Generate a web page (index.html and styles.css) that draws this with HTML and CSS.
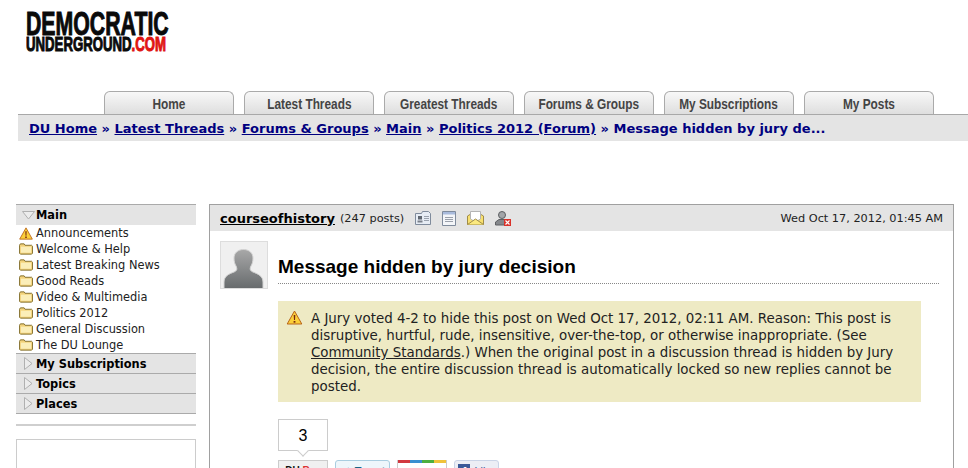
FILE: index.html
```html
<!DOCTYPE html>
<html>
<head>
  <title>Message hidden by jury decision</title>
  <link rel="stylesheet" href="styles.css">
</head>
<body>
  <svg class="defs" width="0" height="0">
    <symbol id="folder" viewBox="0 0 15 12">
      <path d="M.5 2 1.500.5h4l1 1.500h7l1 1v7.500l-1 1H1.500l-1-1z" fill="#f3d27a" stroke="#7d6a2a"/>
      <path d="M2 3.500h11v6.500H2z" fill="#fbeeb8"/>
    </symbol>
    <symbol id="warn" viewBox="0 0 16 15">
      <path d="M8 1 15.300 14H.7z" fill="#fbcf3a" stroke="#b8641a" stroke-linejoin="round"/>
      <path d="M7.200 5h1.600l-.3 5h-1z" fill="#7a2a10"/>
      <path d="M7.100 11h1.800v1.700H7.100z" fill="#7a2a10"/>
    </symbol>
  </svg>

  <div class="logo">
    <div class="logo-top"><span>DEMOCRATIC</span></div>
    <div class="logo-bottom"><span>UNDERGROUND<em>.COM</em></span></div>
  </div>

  <div class="tabs">
    <a class="tab" href="#"><span>Home</span></a>
    <a class="tab" href="#"><span>Latest Threads</span></a>
    <a class="tab" href="#"><span>Greatest Threads</span></a>
    <a class="tab" href="#"><span>Forums &amp; Groups</span></a>
    <a class="tab" href="#"><span>My Subscriptions</span></a>
    <a class="tab" href="#"><span>My Posts</span></a>
  </div>

  <div class="crumbs">
    <a href="#">DU Home</a> » <a href="#">Latest Threads</a> » <a href="#">Forums &amp; Groups</a> » <a href="#">Main</a> » <a href="#">Politics 2012 (Forum)</a> » Message hidden by jury de...
  </div>

  <div class="layout">
    <div class="sidebar">
      <div class="side-menu">
        <div class="side-head open">
          <svg width="13" height="9" viewBox="0 0 13 9"><path d="M.5.500h12L6.500 8z" fill="#ececec" stroke="#b0b0b0"/></svg>
          Main
        </div>
        <a class="side-item" href="#"><svg class="side-icon" width="14" height="13"><use href="#warn"/></svg>Announcements</a>
        <a class="side-item" href="#"><svg class="side-icon" width="14" height="12"><use href="#folder"/></svg>Welcome &amp; Help</a>
        <a class="side-item" href="#"><svg class="side-icon" width="14" height="12"><use href="#folder"/></svg>Latest Breaking News</a>
        <a class="side-item" href="#"><svg class="side-icon" width="14" height="12"><use href="#folder"/></svg>Good Reads</a>
        <a class="side-item" href="#"><svg class="side-icon" width="14" height="12"><use href="#folder"/></svg>Video &amp; Multimedia</a>
        <a class="side-item" href="#"><svg class="side-icon" width="14" height="12"><use href="#folder"/></svg>Politics 2012</a>
        <a class="side-item" href="#"><svg class="side-icon" width="14" height="12"><use href="#folder"/></svg>General Discussion</a>
        <a class="side-item" href="#"><svg class="side-icon" width="14" height="12"><use href="#folder"/></svg>The DU Lounge</a>
        <div class="side-closed">
          <div class="side-head closed">
            <svg width="9" height="13" viewBox="0 0 9 13"><path d="M.5.500v12L8 6.500z" fill="#ececec" stroke="#b0b0b0"/></svg>
            My Subscriptions
          </div>
          <div class="side-head closed">
            <svg width="9" height="13" viewBox="0 0 9 13"><path d="M.5.500v12L8 6.500z" fill="#ececec" stroke="#b0b0b0"/></svg>
            Topics
          </div>
          <div class="side-head closed">
            <svg width="9" height="13" viewBox="0 0 9 13"><path d="M.5.500v12L8 6.500z" fill="#ececec" stroke="#b0b0b0"/></svg>
            Places
          </div>
        </div>
      </div>
      <div class="side-rule"></div>
      <div class="side-box"></div>
    </div>

    <div class="post">
      <div class="post-head">
        <a class="author" href="#">courseofhistory</a>
        <span class="count">(247 posts)</span>
        <span class="post-icons">
          <svg width="16" height="14" viewBox="0 0 16 14"><path d="M.5 2.500h6l1-2h6l2 2v11H.5z" fill="#e6ecf4" stroke="#7f8b9c"/><path d="M3 5h4v3.500H3z" fill="#5f6670"/><path d="M2.500 9.500h5v2h-5z" fill="#7a808a"/><path d="M9 5h5v1H9zM9 7h5v1H9zM9 9h5v1H9z" fill="#9aa2ae"/></svg>
          <svg width="14" height="15" viewBox="0 0 14 15"><path d="M.5.500h13v14H.5z" fill="#f3f5f8" stroke="#7f8b9c"/><path d="M1 1h12v2.500H1z" fill="#a9bbdc"/><path d="M3 6h8v1H3zM3 8h8v1H3zM3 10h8v1H3z" fill="#9aa0aa"/></svg>
          <svg width="17" height="14" viewBox="0 0 17 14"><path d="M.5 5 3 3.500h11L16.500 5v8.500H.5z" fill="#f8e070" stroke="#a08c48"/><path d="M3.500.5h10V8l-5 3-5-3z" fill="#fff" stroke="#b4b4b4"/><path d="M.5 13.500 8.500 8l8 5.500" fill="#fbe97f" stroke="#a08c48"/></svg>
          <svg width="16" height="15" viewBox="0 0 16 15"><circle cx="7" cy="4" r="3.500" fill="#a2a5a8" stroke="#5d5f62"/><path d="M.5 14v-3L4 8.500h6l2 2V14z" fill="#85888c" stroke="#5d5f62"/><path d="M9 8h7v7H9z" fill="#d9322a"/><path d="m10.500 9.500 4 4m0-4-4 4" stroke="#fff" stroke-width="1.200"/></svg>
        </span>
        <span class="post-date">Wed Oct 17, 2012, 01:45 AM</span>
      </div>

      <div class="post-body">
        <div class="avatar">
          <svg width="46" height="46" viewBox="0 0 46 46">
            <defs>
              <linearGradient id="sil" x1="0" y1="0" x2="0" y2="1">
                <stop offset="0" stop-color="#a8a8a8"/>
                <stop offset="1" stop-color="#666a6c"/>
              </linearGradient>
            </defs>
            <path d="M3 47v-7c0-6 5-8 10-10 3-1.200 3.500-3 2-6-1.500-2.500-2-5-2-8 0-5 4-8.500 9.500-8.500S32 11 32 16c0 3-.5 5.500-2 8-1.500 3-1 4.800 2 6 5 2 10 4 10 10v7z" fill="url(#sil)" stroke="#d4d4d4"/>
          </svg>
        </div>
        <div class="post-main">
          <h1 class="post-title">Message hidden by jury decision</h1>
          <div class="notice">
            <svg class="notice-icon" width="17" height="15"><use href="#warn"/></svg>
            <p>A Jury voted 4-2 to hide this post on Wed Oct 17, 2012, 02:11 AM. Reason: This post is disruptive, hurtful, rude, insensitive, over-the-top, or otherwise inappropriate. (See <a href="#">Community Standards</a>.) When the original post in a discussion thread is hidden by Jury decision, the entire discussion thread is automatically locked so new replies cannot be posted.</p>
          </div>
          <div class="rec-count">3</div>
          <div class="share">
            <div class="share-btn du"><b>DU</b> <i>Rec</i></div>
            <div class="share-btn tweet"><svg width="12" height="10" viewBox="0 0 14 10"><path d="M1 3c2 2 4 3 6 3 0-3 3-5 5-2l2-1-1 3c0 3-3 4-6 4S2 8 1 3z" fill="#3b94c8"/></svg> Tweet</div>
            <div class="share-btn gplus">+1</div>
            <div class="share-btn like"><span class="fb">f</span>Like</div>
          </div>
        </div>
      </div>
    </div>
  </div>
</body>
</html>
```

FILE: styles.css
```css
html, body {
  margin: 0;
  height: 468px;
  overflow: hidden;
}
body {
  background: #fff;
  font-family: "DejaVu Sans", Verdana, sans-serif;
  color: #111;
}
.defs {
  display: block;
  height: 0;
}

/* logo */
.logo {
  height: 91px;
  padding: 10px 0 0 26px;
  box-sizing: border-box;
  font-family: "Liberation Sans", Arial, sans-serif;
  font-weight: bold;
  color: #0a0a0a;
  -webkit-text-stroke: 1px #0a0a0a;
  white-space: nowrap;
}
.logo span {
  display: inline-block;
  transform-origin: left center;
}
.logo-top {
  font-size: 33px;
  line-height: 27px;
}
.logo-top span {
  transform: scaleX(0.645);
}
.logo-bottom {
  font-size: 20px;
  line-height: 15px;
}
.logo-bottom span {
  transform: scaleX(0.66);
}
.logo-bottom em {
  font-style: normal;
  color: #e01512;
  -webkit-text-stroke-color: #e01512;
}

/* tabs */
.tabs {
  display: flex;
  gap: 10px;
  margin-left: 104px;
}
.tab {
  width: 130px;
  height: 23px;
  box-sizing: border-box;
  border: 1px solid #aaa;
  border-bottom: 0;
  border-radius: 6px 6px 0 0;
  background: linear-gradient(#f8f8f8, #dedede);
  text-align: center;
  font-family: "Liberation Sans", Arial, sans-serif;
  font-weight: bold;
  font-size: 15px;
  line-height: 24px;
  color: #444;
  text-decoration: none;
  white-space: nowrap;
}
.tab span {
  display: inline-block;
  transform: scaleX(0.79);
}

/* breadcrumb */
.crumbs {
  margin-left: 18px;
  height: 27px;
  box-sizing: border-box;
  border-top: 1px solid #a8a8a8;
  background: #e4e4e4;
  padding-left: 11px;
  font-size: 13px;
  font-weight: bold;
  line-height: 27px;
  color: #000080;
  white-space: nowrap;
}
.crumbs a {
  color: #000080;
}

/* page body */
.layout {
  display: flex;
  gap: 13px;
  margin: 63px 0 0 16px;
}
.sidebar {
  width: 180px;
  flex: none;
}
.side-menu {
  border-top: 1px solid #aaa;
}
.side-head {
  display: flex;
  align-items: center;
  height: 20px;
  box-sizing: border-box;
  background: #e4e4e4;
  font-size: 11.400px;
  font-weight: bold;
  color: #000;
}
.side-head.open {
  padding-left: 6px;
  gap: 1px;
}
.side-closed {
  border-top: 1px solid #aaa;
}
.side-head.closed {
  border-bottom: 1px solid #aaa;
  padding-left: 8px;
  gap: 3px;
}
.side-item {
  display: flex;
  align-items: center;
  height: 16px;
  padding-left: 3px;
  font-size: 11.400px;
  color: #222;
  text-decoration: none;
}
.side-icon {
  margin-right: 3px;
  flex: none;
}
.side-rule {
  height: 2px;
  margin-top: 10px;
  background: #cfcfcf;
}
.side-box {
  height: 60px;
  margin-top: 13px;
  border: 1px solid #ccc;
}

/* post */
.post {
  width: 745px;
  box-sizing: border-box;
  height: 300px;
  border: 1px solid #a0a0a0;
}
.post-head {
  display: flex;
  align-items: center;
  height: 26px;
  background: #e4e4e4;
  padding: 0 10px;
  font-size: 11.300px;
  color: #222;
}
.author {
  font-size: 13px;
  font-weight: bold;
  color: #000;
}
.count {
  margin-left: 5px;
}
.post-icons {
  display: flex;
  align-items: center;
  gap: 11px;
  margin-left: 11px;
}
.post-date {
  margin-left: auto;
}
.post-body {
  display: flex;
  gap: 10px;
  padding: 10px 0 0 10px;
}
.avatar {
  width: 48px;
  height: 48px;
  flex: none;
  box-sizing: border-box;
  border: 1px solid #ddd;
  background: #f0f0f0;
  overflow: hidden;
}
.post-main {
  width: 661px;
}
.post-title {
  margin: 0 0 17px;
  height: 43px;
  box-sizing: border-box;
  border-bottom: 1px dotted #888;
  font-family: "Liberation Sans", Arial, sans-serif;
  font-size: 19px;
  font-weight: bold;
  line-height: 52px;
  color: #000;
}
.notice {
  display: flex;
  width: 643px;
  height: 101px;
  box-sizing: border-box;
  background: #eeeac4;
  padding: 9px 10px 0 8px;
}
.notice-icon {
  flex: none;
  margin: 0 8px 0 0;
}
.notice p {
  margin: 0;
  font-size: 13.400px;
  line-height: 17px;
  color: #222;
}
.notice a {
  color: #222;
}
.rec-count {
  position: relative;
  width: 50px;
  height: 32px;
  box-sizing: border-box;
  margin-top: 17px;
  border: 1px solid #ccc;
  text-align: center;
  font-family: "Liberation Sans", Arial, sans-serif;
  font-size: 16px;
  line-height: 32px;
  color: #000;
}
.rec-count::after {
  content: "";
  position: absolute;
  left: 20px;
  bottom: -5px;
  width: 7px;
  height: 7px;
  background: #fff;
  border-right: 1px solid #ccc;
  border-bottom: 1px solid #ccc;
  transform: rotate(45deg);
}
.share {
  display: flex;
  margin-top: 9px;
  gap: 7px;
}
.share-btn {
  height: 26px;
  box-sizing: border-box;
  padding-top: 3px;
  font-family: "Liberation Sans", Arial, sans-serif;
  font-size: 11px;
  line-height: 14px;
  text-align: center;
  white-space: nowrap;
  border-radius: 3px;
}
.du {
  width: 50px;
  border: 1px solid #ccc;
  border-radius: 0;
  background: #f0f0f0;
  font-size: 10px;
}
.du i {
  color: #d33;
  font-style: normal;
  font-weight: bold;
}
.tweet {
  width: 55px;
  border: 1px solid #a9cde0;
  background: #eef6fb;
  color: #186487;
  font-weight: bold;
}
.gplus {
  width: 50px;
  padding-top: 5px;
  border: 1px solid #ccc;
  border-top: 0;
  border-radius: 0;
  background: linear-gradient(90deg, #d2383f 0 25%, #3a8fd0 25% 50%, #4caf3f 50% 75%, #f0c23a 75%) no-repeat top / 100% 3px;
  color: #3b5fa0;
  font-weight: bold;
}
.like {
  width: 45px;
  border: 1px solid #cad4e7;
  background: #eceef5;
  color: #3b5998;
}
.fb {
  display: inline-block;
  width: 12px;
  height: 12px;
  margin-right: 4px;
  background: #3b5998;
  color: #fff;
  font-weight: bold;
  line-height: 14px;
}
```
